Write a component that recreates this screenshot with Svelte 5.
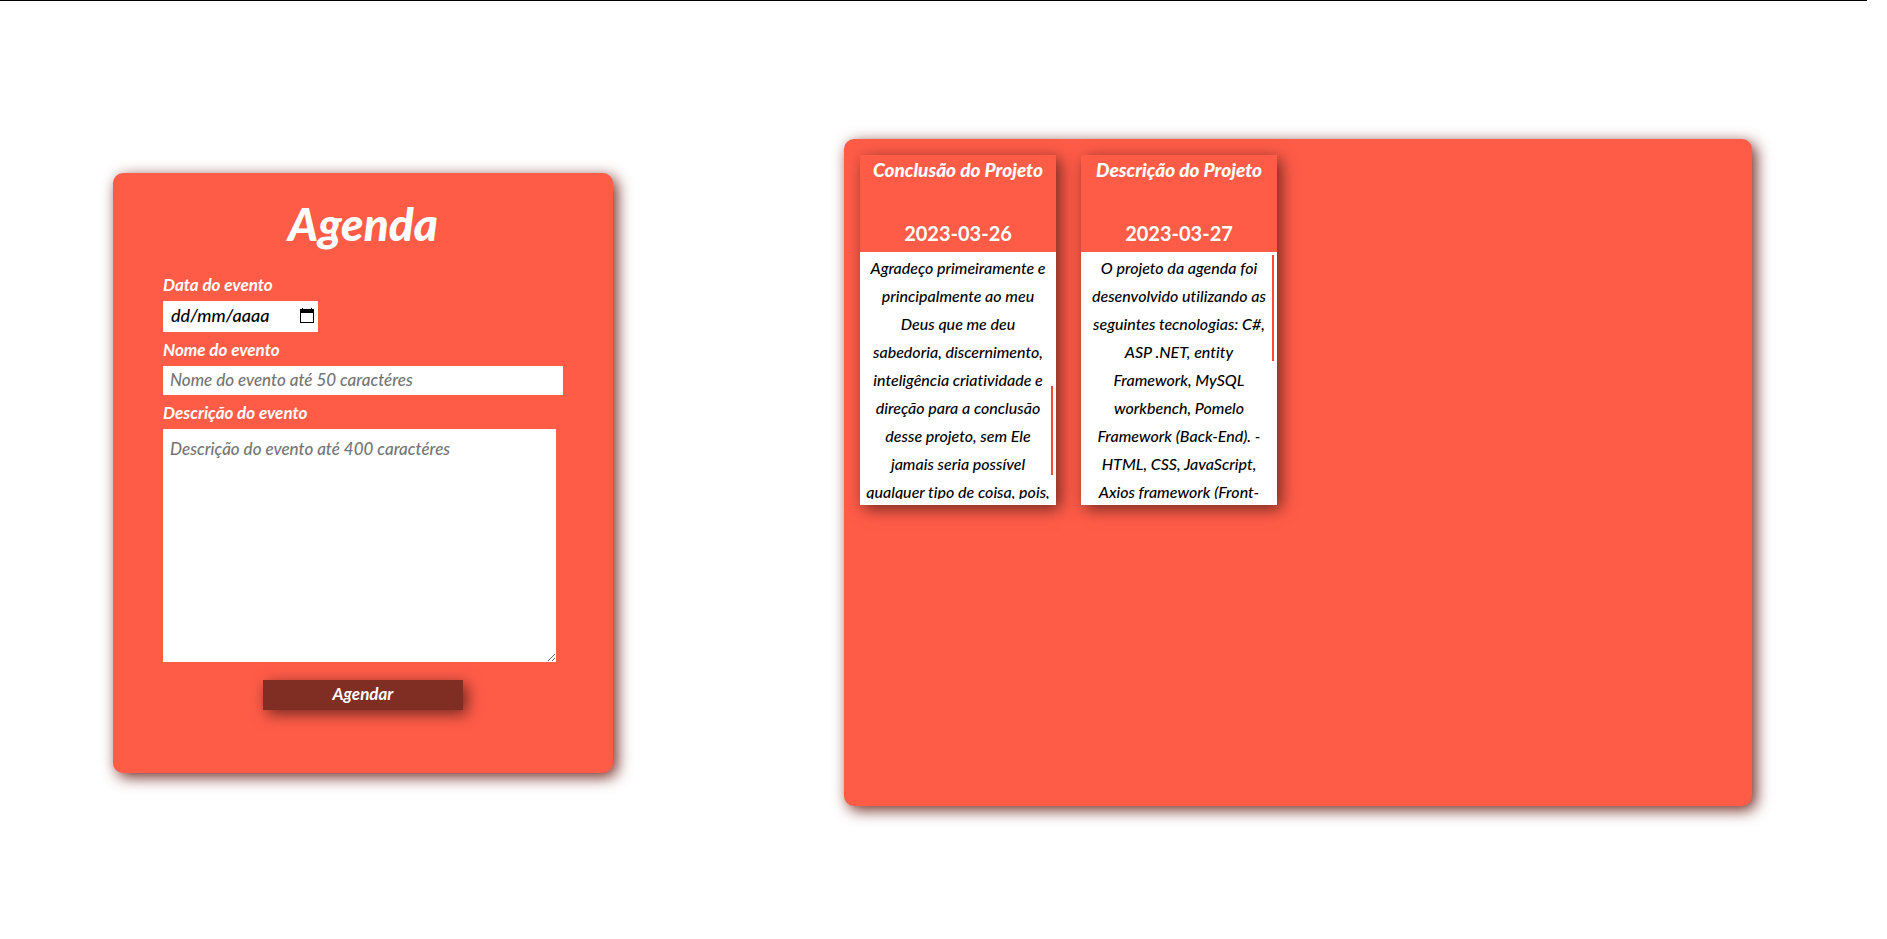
<script>
  const events = [
    {
      title: 'Conclusão do Projeto',
      date: '2023-03-26',
      thumb: { top: 134, height: 89 },
      lines: [
        'Agradeço primeiramente e',
        'principalmente ao meu',
        'Deus que me deu',
        'sabedoria, discernimento,',
        'inteligência criatividade e',
        'direção para a conclusão',
        'desse projeto, sem Ele',
        'jamais seria possível',
        'qualquer tipo de coisa, pois,'
      ]
    },
    {
      title: 'Descrição do Projeto',
      date: '2023-03-27',
      thumb: { top: 3, height: 106 },
      lines: [
        'O projeto da agenda foi',
        'desenvolvido utilizando as',
        'seguintes tecnologias: C#,',
        'ASP .NET, entity',
        'Framework, MySQL',
        'workbench, Pomelo',
        'Framework (Back-End). -',
        'HTML, CSS, JavaScript,',
        'Axios framework (Front-'
      ]
    }
  ];
</script>

<div class="topline"></div>
<main>
  <form class="panel agenda" onsubmit={(e) => e.preventDefault()}>
    <h1>Agenda</h1>

    <label for="date">Data do evento</label>
    <div class="date">
      <input id="date" type="text" placeholder="dd/mm/aaaa" />
      <button type="button" class="picker" aria-label="Calendário">
        <svg viewBox="0 0 14 16" width="14" height="16" shape-rendering="crispEdges">
          <path fill="#000" fill-rule="evenodd" d="M2 0h1v1h8V0h1v1h2v14H0V1h2zM1 5v9h12V5z" />
        </svg>
      </button>
    </div>

    <label for="name">Nome do evento</label>
    <input id="name" class="name" type="text" placeholder="Nome do evento até 50 caractéres" />

    <label for="description">Descrição do evento</label>
    <textarea id="description" placeholder="Descrição do evento até 400 caractéres"></textarea>

    <button type="submit" class="submit">Agendar</button>
  </form>

  <section class="panel board">
    {#each events as event}
      <article>
        <header>
          <h2>{event.title}</h2>
          <time datetime={event.date}>{event.date}</time>
        </header>
        <div class="body">
          <p>
            {#each event.lines as line}
              <span>{line}</span>
            {/each}
          </p>
          <i style="top: {event.thumb.top}px; height: {event.thumb.height}px"></i>
        </div>
      </article>
    {/each}
  </section>
</main>

<style>
  :global(body) {
    margin: 0;
    background: #fff;
    font-family: Lato, "Open Sans", sans-serif;
    font-variant-ligatures: none;
  }
  * {
    box-sizing: border-box;
  }
  .topline {
    height: 1px;
    margin-right: 20px;
    background: #000;
  }
  main {
    display: flex;
    align-items: center;
    justify-content: space-between;
    padding: 138px 135px 133px 113px;
  }
  .panel {
    background: #ff5c48;
    border-radius: 10px;
    box-shadow: 4px 4px 15px #702820;
  }
  .agenda {
    display: flex;
    flex-direction: column;
    width: 30.5%;
    min-height: 600px;
    padding: 23px 50px;
    color: #fff;
    font-style: italic;
  }
  h1 {
    margin: 0 0 21px;
    font-size: 46px;
    line-height: 56px;
    font-weight: 900;
    text-align: center;
  }
  label {
    margin-bottom: 4px;
    font-size: 17px;
    line-height: 24px;
    font-weight: 700;
  }
  input,
  textarea {
    border: 0;
    border-radius: 0;
    outline: 0;
    background: #fff;
    color: #000;
    font: italic 500 17px/24px Lato, "Open Sans", sans-serif;
  }
  ::placeholder {
    color: #757575;
    opacity: 1;
  }
  .date {
    display: flex;
    align-items: center;
    width: 155px;
    height: 31px;
    margin-bottom: 6px;
    padding: 0 4px 0 8px;
    background: #fff;
  }
  .date input {
    flex: 1;
    min-width: 0;
    padding: 0 0 2px;
    font-size: 18px;
  }
  .date ::placeholder {
    color: #000;
  }
  .picker {
    display: flex;
    padding: 0;
    border: 0;
    background: none;
  }
  .name {
    height: 29px;
    margin-bottom: 6px;
    padding: 0 7px 2px;
  }
  textarea {
    height: 233px;
    margin: 0 7px 18px 0;
    padding: 8px 7px;
    resize: both;
  }
  .submit {
    align-self: center;
    width: 50%;
    height: 30px;
    padding: 0 0 2px;
    border: 0;
    background: #802d24;
    box-shadow: 4px 4px 15px #702820;
    color: #fff;
    font: italic 700 17px/24px Lato, "Open Sans", sans-serif;
  }
  .board {
    display: flex;
    align-items: flex-start;
    gap: 25px;
    width: 55.4%;
    min-height: 667px;
    padding: 16px;
  }
  article {
    width: 196px;
    box-shadow: 4px 4px 15px #702820;
    text-align: center;
  }
  header {
    display: flex;
    flex-direction: column;
    justify-content: space-between;
    height: 97px;
    padding: 3px 0 7px;
    background: #ff5c48;
    color: #fff;
  }
  h2 {
    margin: 0;
    font-size: 19px;
    line-height: 24px;
    font-weight: 900;
    font-style: italic;
  }
  time {
    font-size: 20px;
    line-height: 24px;
    font-weight: 700;
  }
  .body {
    position: relative;
    padding: 2px 0 6px;
    background: #fff;
  }
  p {
    height: 245px;
    margin: 0;
    overflow: hidden;
    color: #000;
    font-size: 16px;
    line-height: 28px;
    font-style: italic;
    font-weight: 500;
  }
  p span {
    display: block;
    white-space: nowrap;
  }
  i {
    position: absolute;
    right: 3px;
    width: 2px;
    background: #ff4a2e;
  }
</style>
